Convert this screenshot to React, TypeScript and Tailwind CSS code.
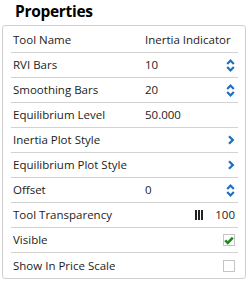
import React from "react";

type Kind = "text" | "spin" | "chevron" | "transparency" | "check" | "uncheck";

const ROWS: { label: string; value?: string; kind: Kind }[] = [
  { label: "Tool Name", value: "Inertia Indicator", kind: "text" },
  { label: "RVI Bars", value: "10", kind: "spin" },
  { label: "Smoothing Bars", value: "20", kind: "spin" },
  { label: "Equilibrium Level", value: "50.000", kind: "text" },
  { label: "Inertia Plot Style", kind: "chevron" },
  { label: "Equilibrium Plot Style", kind: "chevron" },
  { label: "Offset", value: "0", kind: "spin" },
  { label: "Tool Transparency", kind: "transparency" },
  { label: "Visible", kind: "check" },
  { label: "Show In Price Scale", kind: "uncheck" },
];

function Spinner() {
  return (
    <svg width="9" height="13" viewBox="0 0 9 13" className="text-[#1f6fc0]">
      <path d="M1.2 5 L4.5 1.6 L7.8 5" fill="none" stroke="currentColor" strokeWidth="2.2" strokeLinejoin="miter" />
      <path d="M1.2 8 L4.5 11.4 L7.8 8" fill="none" stroke="currentColor" strokeWidth="2.2" strokeLinejoin="miter" />
    </svg>
  );
}

function Chevron() {
  return (
    <svg width="8" height="10" viewBox="0 0 8 10" className="text-[#1f6fc0]">
      <path d="M2 1.3 L5.8 5 L2 8.7" fill="none" stroke="currentColor" strokeWidth="2.3" />
    </svg>
  );
}

function Right({ kind }: { kind: Kind }) {
  if (kind === "spin") return <Spinner />;
  if (kind === "chevron") return <Chevron />;
  if (kind === "transparency")
    return (
      <div className="flex items-center gap-[12px]">
        <div className="flex gap-[1px] h-[10px]">
          <span className="w-[2px] bg-[#222]" />
          <span className="w-[2px] bg-[#222]" />
          <span className="w-[2px] bg-[#222]" />
        </div>
        <span className="text-[#222]">100</span>
      </div>
    );
  if (kind === "check")
    return (
      <div className="w-[12px] h-[12px] border border-[#c4c4c4] bg-white flex items-center justify-center">
        <svg width="10" height="9" viewBox="0 0 10 9">
          <path d="M1.2 4.4 L3.8 7 L8.8 1.6" fill="none" stroke="#1f8a1f" strokeWidth="2.6" />
        </svg>
      </div>
    );
  if (kind === "uncheck")
    return <div className="w-[12px] h-[12px] border border-[#c4c4c4] bg-white" />;
  return null;
}

export default function App() {
  return (
    <div className="w-[249px] h-[283px] bg-white text-[#1c1c1c]" style={{ fontFamily: '"Open Sans", sans-serif' }}>
      <div className="h-[25px] pl-[15px] pt-[1px] text-[15.5px] font-bold text-black leading-[20px] tracking-[-0.3px]">
        Properties
      </div>
      <div className="ml-[2px] w-[244px] border border-[#cfcfcf] rounded-[3px] pl-[8px] pr-[7px] pt-[2px]">
        {ROWS.map((row, i) => (
          <div
            key={row.label}
            className={`h-[25px] flex items-center pl-[2px] pr-[3px] text-[11.5px] ${
              i < ROWS.length - 1 ? "border-b border-[#d2d2d2]" : ""
            }`}
          >
            <span className="w-[132px] shrink-0">{row.label}</span>
            <span className="flex-1">{row.value}</span>
            <div className="flex items-center justify-end">
              <Right kind={row.kind} />
            </div>
          </div>
        ))}
      </div>
    </div>
  );
}
